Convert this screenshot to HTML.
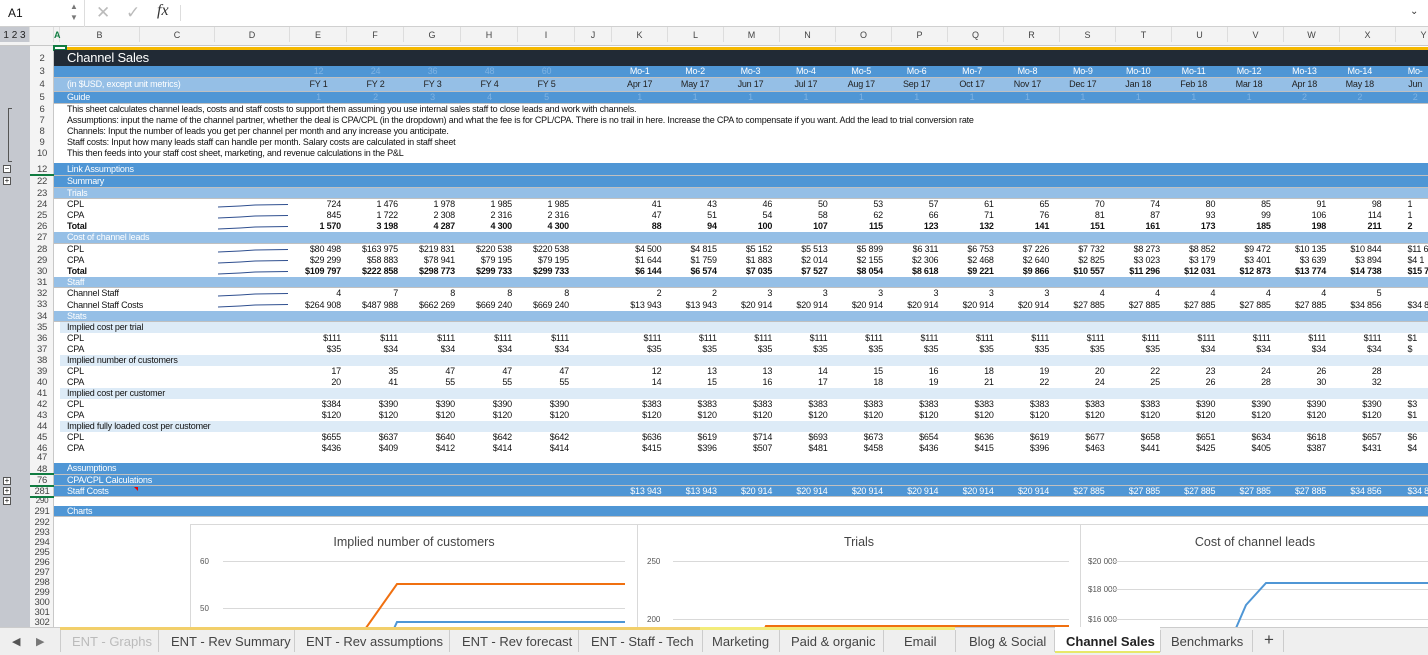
<!DOCTYPE html>
<html><head><meta charset="utf-8">
<style>
*{box-sizing:border-box;margin:0;padding:0}
body{width:1428px;height:655px;overflow:hidden;position:relative;background:#fff;font-family:"Liberation Sans",sans-serif;color:#111}
.abs{position:absolute}
.fb{left:0;top:0;width:1428px;height:27px;border-bottom:1px solid #d0d0d0;background:#fff}
.ch{left:0;top:27px;width:1428px;height:19px;background:#f3f3f3;border-bottom:1px solid #c8c8c8;font-size:9px;color:#444}
.ch span{position:absolute;top:4px;text-align:center;border-right:1px solid #ddd;height:15px;top:0;line-height:17px}
.gut{left:0;top:46px;width:30px;height:581px;background:#c5c8cf}
.rn{left:30px;top:46px;width:24px;height:581px;background:#f4f4f4;border-right:1px solid #c8c8c8}
.n{position:absolute;left:30px;width:24px;text-align:center;font-size:9.5px;color:#444;letter-spacing:-.3px}
.r{position:absolute;left:54px;width:1374px;display:flex;font-size:9px;white-space:nowrap;letter-spacing:-.2px;overflow:hidden}
.r .l{width:236px;padding-left:13px;flex:none}
.r .v{width:57px;text-align:right;padding-right:6px;flex:none}
.r .j{width:37px;flex:none}
.r .m{width:55.4px;text-align:right;padding-right:6px;flex:none}
.r span:nth-child(22){text-align:left;padding-left:20px;padding-right:0}
.c{text-align:center!important;padding-right:0!important;padding-left:0!important}
.bd{background:#4f96d5;color:#fff;border-bottom:1px solid #c0c0c0}
.lt{background:#95bfe6;color:#fff;border-bottom:1px solid #c0c0c0}
.pl{background:#ddebf7}
.b{font-weight:bold}
.fa{color:#7fb3e3}
.tabs{left:0;top:627px;width:1428px;height:28px;background:#efefef;border-top:1px solid #ccc;font-size:13px;color:#444}
.tabs span{position:absolute;top:6px}
.tabs i{position:absolute;top:2px;width:1px;height:22px;background:#ccc}
.chart{position:absolute;top:524px;height:110px;border:1px solid #d9d9d9;background:#fff}
.ct{position:absolute;font-size:12.5px;color:#444;text-align:center;width:100%;top:10px}
.ax{position:absolute;font-size:8px;color:#555}
.gl{position:absolute;height:1px;background:#d9d9d9}
</style></head><body>
<div class="abs fb">
<span class="abs" style="left:8px;top:6px;font-size:12px">A1</span>
<span class="abs" style="left:70px;top:1px;font-size:8px;color:#777;line-height:11px">▲<br>▼</span>
<div class="abs" style="left:84px;top:0;width:1px;height:27px;background:#ddd"></div>
<span class="abs" style="left:96px;top:3px;font-size:17px;color:#bbb">✕</span>
<span class="abs" style="left:126px;top:3px;font-size:17px;color:#bbb">✓</span>
<span class="abs" style="left:157px;top:2px;font-size:16px;font-style:italic;font-family:'Liberation Serif',serif;color:#333">fx</span>
<div class="abs" style="left:180px;top:5px;width:1px;height:16px;background:#ddd"></div>
<span class="abs" style="left:1410px;top:6px;font-size:10px;color:#333">⌄</span>
</div>
<div class="abs ch">
<span style="left:0;width:30px;font-size:10px;color:#222;background:#c5c8cf">1 2 3</span>
<span style="left:30px;width:24px"></span>
<span style="left:54px;width:6px;color:#107c41;font-weight:bold">A</span>
<span style="left:60px;width:80px">B</span><span style="left:140px;width:75px">C</span><span style="left:215px;width:75px">D</span>
<span style="left:290px;width:57px">E</span><span style="left:347px;width:57px">F</span><span style="left:404px;width:57px">G</span><span style="left:461px;width:57px">H</span><span style="left:518px;width:57px">I</span><span style="left:575px;width:37px">J</span>
<span style="left:612px;width:56px">K</span><span style="left:668px;width:56px">L</span><span style="left:724px;width:56px">M</span><span style="left:780px;width:56px">N</span><span style="left:836px;width:56px">O</span><span style="left:892px;width:56px">P</span><span style="left:948px;width:56px">Q</span><span style="left:1004px;width:56px">R</span><span style="left:1060px;width:56px">S</span><span style="left:1116px;width:56px">T</span><span style="left:1172px;width:56px">U</span><span style="left:1228px;width:56px">V</span><span style="left:1284px;width:56px">W</span><span style="left:1340px;width:56px">X</span><span style="left:1396px;width:56px">Y</span>
</div>
<div class="abs gut"></div><div class="abs rn"></div>
<div class="abs" style="left:8px;top:108px;width:4px;height:54px;border:1px solid #555;border-right:none"></div>
<div class="abs" style="left:3px;top:165px;width:8px;height:8px;border:1px solid #555;background:#fff;font-size:8px;line-height:6px;text-align:center">−</div>
<div class="abs" style="left:3px;top:177px;width:8px;height:8px;border:1px solid #555;background:#fff;font-size:8px;line-height:6px;text-align:center">+</div>
<div class="abs" style="left:3px;top:477px;width:8px;height:8px;border:1px solid #555;background:#fff;font-size:8px;line-height:6px;text-align:center">+</div>
<div class="abs" style="left:3px;top:487px;width:8px;height:8px;border:1px solid #555;background:#fff;font-size:8px;line-height:6px;text-align:center">+</div>
<div class="abs" style="left:3px;top:497px;width:8px;height:8px;border:1px solid #555;background:#fff;font-size:8px;line-height:6px;text-align:center">+</div>

<div class="abs" style="left:54px;top:47px;width:1374px;height:3px;background:#f5b800"></div>
<div class="abs" style="left:53px;top:45px;width:14px;height:6px;border:2px solid #107c41;background:#fff"></div>
<div class="n" style="top:53px">2</div><div class="n" style="top:66px">3</div><div class="n" style="top:79px">4</div><div class="n" style="top:92px">5</div>
<div class="n" style="top:104px">6</div><div class="n" style="top:115px">7</div><div class="n" style="top:126px">8</div><div class="n" style="top:137px">9</div><div class="n" style="top:148px">10</div>
<div class="n" style="top:164px">12</div><div class="n" style="top:176px">22</div><div class="n" style="top:188px">23</div><div class="n" style="top:199px">24</div><div class="n" style="top:210px">25</div><div class="n" style="top:221px">26</div><div class="n" style="top:232px">27</div><div class="n" style="top:244px">28</div><div class="n" style="top:255px">29</div><div class="n" style="top:266px">30</div><div class="n" style="top:277px">31</div><div class="n" style="top:288px">32</div><div class="n" style="top:299px">33</div><div class="n" style="top:311px">34</div><div class="n" style="top:322px">35</div><div class="n" style="top:333px">36</div><div class="n" style="top:344px">37</div><div class="n" style="top:355px">38</div><div class="n" style="top:366px">39</div><div class="n" style="top:377px">40</div><div class="n" style="top:388px">41</div><div class="n" style="top:399px">42</div><div class="n" style="top:410px">43</div><div class="n" style="top:421px">44</div><div class="n" style="top:432px">45</div><div class="n" style="top:443px">46</div><div class="n" style="top:452px">47</div><div class="n" style="top:464px">48</div><div class="n" style="top:475px">76</div><div class="n" style="top:486px">281</div><div class="n" style="top:496px;font-size:8px">290</div><div class="n" style="top:506px">291</div>
<div class="n" style="top:517px">292</div><div class="n" style="top:527px">293</div><div class="n" style="top:537px">294</div><div class="n" style="top:547px">295</div><div class="n" style="top:557px">296</div><div class="n" style="top:567px">297</div><div class="n" style="top:577px">298</div><div class="n" style="top:587px">299</div><div class="n" style="top:597px">300</div><div class="n" style="top:607px">301</div><div class="n" style="top:617px">302</div>
<div class="abs" style="left:30px;top:174px;width:24px;height:2px;background:#107c41"></div>
<div class="abs" style="left:30px;top:473px;width:24px;height:2px;background:#107c41"></div>
<div class="abs" style="left:30px;top:485px;width:24px;height:2px;background:#107c41"></div>
<div class="abs" style="left:30px;top:496px;width:24px;height:2px;background:#107c41"></div>

<div class="r" style="top:50px;height:16px;background:#212a35;color:#fff;font-size:13px;line-height:16px"><span class="l">Channel Sales</span></div>
<div class="r bd" style="top:66px;height:12px;line-height:11px"><span class="l"></span><span class="v c fa">12</span><span class="v c fa">24</span><span class="v c fa">36</span><span class="v c fa">48</span><span class="v c fa">60</span><span class="j"></span><span class="m c">Mo-1</span><span class="m c">Mo-2</span><span class="m c">Mo-3</span><span class="m c">Mo-4</span><span class="m c">Mo-5</span><span class="m c">Mo-6</span><span class="m c">Mo-7</span><span class="m c">Mo-8</span><span class="m c">Mo-9</span><span class="m c">Mo-10</span><span class="m c">Mo-11</span><span class="m c">Mo-12</span><span class="m c">Mo-13</span><span class="m c">Mo-14</span><span class="m c">Mo-</span></div>
<div class="r lt" style="top:78px;height:14px;line-height:13px;color:#222"><span class="l" style="color:#fff">(in $USD, except unit metrics)</span><span class="v c">FY 1</span><span class="v c">FY 2</span><span class="v c">FY 3</span><span class="v c">FY 4</span><span class="v c">FY 5</span><span class="j"></span><span class="m c">Apr 17</span><span class="m c">May 17</span><span class="m c">Jun 17</span><span class="m c">Jul 17</span><span class="m c">Aug 17</span><span class="m c">Sep 17</span><span class="m c">Oct 17</span><span class="m c">Nov 17</span><span class="m c">Dec 17</span><span class="m c">Jan 18</span><span class="m c">Feb 18</span><span class="m c">Mar 18</span><span class="m c">Apr 18</span><span class="m c">May 18</span><span class="m c">Jun</span></div>
<div class="r bd" style="top:92px;height:12px;line-height:11px"><span class="l">Guide</span><span class="v c fa">1</span><span class="v c fa">2</span><span class="v c fa">3</span><span class="v c fa">4</span><span class="v c fa">5</span><span class="j"></span><span class="m c fa">1</span><span class="m c fa">1</span><span class="m c fa">1</span><span class="m c fa">1</span><span class="m c fa">1</span><span class="m c fa">1</span><span class="m c fa">1</span><span class="m c fa">1</span><span class="m c fa">1</span><span class="m c fa">1</span><span class="m c fa">1</span><span class="m c fa">1</span><span class="m c fa">2</span><span class="m c fa">2</span><span class="m c fa">2</span></div>
<div class="r" style="top:104px;height:11px;line-height:11px"><span class="l">This sheet calculates channel leads, costs and staff costs to support them assuming you use internal sales staff to close leads and work with channels.</span></div>
<div class="r" style="top:115px;height:11px;line-height:11px"><span class="l">Assumptions: input the name of the channel partner, whether the deal is CPA/CPL (in the dropdown) and what the fee is for CPL/CPA. There is no trail in here. Increase the CPA to compensate if you want. Add the lead to trial conversion rate</span></div>
<div class="r" style="top:126px;height:11px;line-height:11px"><span class="l">Channels: Input the number of leads you get per channel per month and any increase you anticipate.</span></div>
<div class="r" style="top:137px;height:11px;line-height:11px"><span class="l">Staff costs: Input how many leads staff can handle per month. Salary costs are calculated in staff sheet</span></div>
<div class="r" style="top:148px;height:11px;line-height:11px"><span class="l">This then feeds into your staff cost sheet, marketing, and revenue calculations in the P&amp;L</span></div>
<div class="r bd" style="top:163px;height:13px;line-height:12px"><span class="l">Link Assumptions</span></div>
<div class="r bd" style="top:176px;height:12px;line-height:11px"><span class="l">Summary</span></div>
<div class="r lt" style="top:188px;height:11px;line-height:10px"><span class="l">Trials</span></div>
<div class="r" style="top:199px;height:11px;line-height:11px"><span class="l">CPL</span><span class="v">724</span><span class="v">1 476</span><span class="v">1 978</span><span class="v">1 985</span><span class="v">1 985</span><span class="j"></span><span class="m">41</span><span class="m">43</span><span class="m">46</span><span class="m">50</span><span class="m">53</span><span class="m">57</span><span class="m">61</span><span class="m">65</span><span class="m">70</span><span class="m">74</span><span class="m">80</span><span class="m">85</span><span class="m">91</span><span class="m">98</span><span class="m">1</span></div>
<div class="r" style="top:210px;height:11px;line-height:11px"><span class="l">CPA</span><span class="v">845</span><span class="v">1 722</span><span class="v">2 308</span><span class="v">2 316</span><span class="v">2 316</span><span class="j"></span><span class="m">47</span><span class="m">51</span><span class="m">54</span><span class="m">58</span><span class="m">62</span><span class="m">66</span><span class="m">71</span><span class="m">76</span><span class="m">81</span><span class="m">87</span><span class="m">93</span><span class="m">99</span><span class="m">106</span><span class="m">114</span><span class="m">1</span></div>
<div class="r b" style="top:221px;height:11px;line-height:11px"><span class="l">Total</span><span class="v">1 570</span><span class="v">3 198</span><span class="v">4 287</span><span class="v">4 300</span><span class="v">4 300</span><span class="j"></span><span class="m">88</span><span class="m">94</span><span class="m">100</span><span class="m">107</span><span class="m">115</span><span class="m">123</span><span class="m">132</span><span class="m">141</span><span class="m">151</span><span class="m">161</span><span class="m">173</span><span class="m">185</span><span class="m">198</span><span class="m">211</span><span class="m">2</span></div>
<div class="r lt" style="top:232px;height:12px;line-height:11px"><span class="l">Cost of channel leads</span></div>
<div class="r" style="top:244px;height:11px;line-height:11px"><span class="l">CPL</span><span class="v">$80 498</span><span class="v">$163 975</span><span class="v">$219 831</span><span class="v">$220 538</span><span class="v">$220 538</span><span class="j"></span><span class="m">$4 500</span><span class="m">$4 815</span><span class="m">$5 152</span><span class="m">$5 513</span><span class="m">$5 899</span><span class="m">$6 311</span><span class="m">$6 753</span><span class="m">$7 226</span><span class="m">$7 732</span><span class="m">$8 273</span><span class="m">$8 852</span><span class="m">$9 472</span><span class="m">$10 135</span><span class="m">$10 844</span><span class="m">$11 6</span></div>
<div class="r" style="top:255px;height:11px;line-height:11px"><span class="l">CPA</span><span class="v">$29 299</span><span class="v">$58 883</span><span class="v">$78 941</span><span class="v">$79 195</span><span class="v">$79 195</span><span class="j"></span><span class="m">$1 644</span><span class="m">$1 759</span><span class="m">$1 883</span><span class="m">$2 014</span><span class="m">$2 155</span><span class="m">$2 306</span><span class="m">$2 468</span><span class="m">$2 640</span><span class="m">$2 825</span><span class="m">$3 023</span><span class="m">$3 179</span><span class="m">$3 401</span><span class="m">$3 639</span><span class="m">$3 894</span><span class="m">$4 1</span></div>
<div class="r b" style="top:266px;height:11px;line-height:11px"><span class="l">Total</span><span class="v">$109 797</span><span class="v">$222 858</span><span class="v">$298 773</span><span class="v">$299 733</span><span class="v">$299 733</span><span class="j"></span><span class="m">$6 144</span><span class="m">$6 574</span><span class="m">$7 035</span><span class="m">$7 527</span><span class="m">$8 054</span><span class="m">$8 618</span><span class="m">$9 221</span><span class="m">$9 866</span><span class="m">$10 557</span><span class="m">$11 296</span><span class="m">$12 031</span><span class="m">$12 873</span><span class="m">$13 774</span><span class="m">$14 738</span><span class="m">$15 7</span></div>
<div class="r lt" style="top:277px;height:11px;line-height:10px"><span class="l">Staff</span></div>
<div class="r" style="top:288px;height:11px;line-height:11px"><span class="l">Channel Staff</span><span class="v">4</span><span class="v">7</span><span class="v">8</span><span class="v">8</span><span class="v">8</span><span class="j"></span><span class="m">2</span><span class="m">2</span><span class="m">3</span><span class="m">3</span><span class="m">3</span><span class="m">3</span><span class="m">3</span><span class="m">3</span><span class="m">4</span><span class="m">4</span><span class="m">4</span><span class="m">4</span><span class="m">4</span><span class="m">5</span><span class="m"></span></div>
<div class="r" style="top:299px;height:12px;line-height:12px"><span class="l">Channel Staff Costs</span><span class="v">$264 908</span><span class="v">$487 988</span><span class="v">$662 269</span><span class="v">$669 240</span><span class="v">$669 240</span><span class="j"></span><span class="m">$13 943</span><span class="m">$13 943</span><span class="m">$20 914</span><span class="m">$20 914</span><span class="m">$20 914</span><span class="m">$20 914</span><span class="m">$20 914</span><span class="m">$20 914</span><span class="m">$27 885</span><span class="m">$27 885</span><span class="m">$27 885</span><span class="m">$27 885</span><span class="m">$27 885</span><span class="m">$34 856</span><span class="m">$34 8</span></div>
<div class="r lt" style="top:311px;height:11px;line-height:10px"><span class="l">Stats</span></div>
<div class="r pl" style="top:322px;height:11px;line-height:11px;left:60px"><span class="l" style="padding-left:7px">Implied cost per trial</span></div>
<div class="r" style="top:333px;height:11px;line-height:11px"><span class="l">CPL</span><span class="v">$111</span><span class="v">$111</span><span class="v">$111</span><span class="v">$111</span><span class="v">$111</span><span class="j"></span><span class="m">$111</span><span class="m">$111</span><span class="m">$111</span><span class="m">$111</span><span class="m">$111</span><span class="m">$111</span><span class="m">$111</span><span class="m">$111</span><span class="m">$111</span><span class="m">$111</span><span class="m">$111</span><span class="m">$111</span><span class="m">$111</span><span class="m">$111</span><span class="m">$1</span></div>
<div class="r" style="top:344px;height:11px;line-height:11px"><span class="l">CPA</span><span class="v">$35</span><span class="v">$34</span><span class="v">$34</span><span class="v">$34</span><span class="v">$34</span><span class="j"></span><span class="m">$35</span><span class="m">$35</span><span class="m">$35</span><span class="m">$35</span><span class="m">$35</span><span class="m">$35</span><span class="m">$35</span><span class="m">$35</span><span class="m">$35</span><span class="m">$35</span><span class="m">$34</span><span class="m">$34</span><span class="m">$34</span><span class="m">$34</span><span class="m">$</span></div>
<div class="r pl" style="top:355px;height:11px;line-height:11px;left:60px"><span class="l" style="padding-left:7px">Implied number of customers</span></div>
<div class="r" style="top:366px;height:11px;line-height:11px"><span class="l">CPL</span><span class="v">17</span><span class="v">35</span><span class="v">47</span><span class="v">47</span><span class="v">47</span><span class="j"></span><span class="m">12</span><span class="m">13</span><span class="m">13</span><span class="m">14</span><span class="m">15</span><span class="m">16</span><span class="m">18</span><span class="m">19</span><span class="m">20</span><span class="m">22</span><span class="m">23</span><span class="m">24</span><span class="m">26</span><span class="m">28</span></div>
<div class="r" style="top:377px;height:11px;line-height:11px"><span class="l">CPA</span><span class="v">20</span><span class="v">41</span><span class="v">55</span><span class="v">55</span><span class="v">55</span><span class="j"></span><span class="m">14</span><span class="m">15</span><span class="m">16</span><span class="m">17</span><span class="m">18</span><span class="m">19</span><span class="m">21</span><span class="m">22</span><span class="m">24</span><span class="m">25</span><span class="m">26</span><span class="m">28</span><span class="m">30</span><span class="m">32</span></div>
<div class="r pl" style="top:388px;height:11px;line-height:11px;left:60px"><span class="l" style="padding-left:7px">Implied cost per customer</span></div>
<div class="r" style="top:399px;height:11px;line-height:11px"><span class="l">CPL</span><span class="v">$384</span><span class="v">$390</span><span class="v">$390</span><span class="v">$390</span><span class="v">$390</span><span class="j"></span><span class="m">$383</span><span class="m">$383</span><span class="m">$383</span><span class="m">$383</span><span class="m">$383</span><span class="m">$383</span><span class="m">$383</span><span class="m">$383</span><span class="m">$383</span><span class="m">$383</span><span class="m">$390</span><span class="m">$390</span><span class="m">$390</span><span class="m">$390</span><span class="m">$3</span></div>
<div class="r" style="top:410px;height:11px;line-height:11px"><span class="l">CPA</span><span class="v">$120</span><span class="v">$120</span><span class="v">$120</span><span class="v">$120</span><span class="v">$120</span><span class="j"></span><span class="m">$120</span><span class="m">$120</span><span class="m">$120</span><span class="m">$120</span><span class="m">$120</span><span class="m">$120</span><span class="m">$120</span><span class="m">$120</span><span class="m">$120</span><span class="m">$120</span><span class="m">$120</span><span class="m">$120</span><span class="m">$120</span><span class="m">$120</span><span class="m">$1</span></div>
<div class="r pl" style="top:421px;height:11px;line-height:11px;left:60px"><span class="l" style="padding-left:7px">Implied fully loaded cost per customer</span></div>
<div class="r" style="top:432px;height:11px;line-height:11px"><span class="l">CPL</span><span class="v">$655</span><span class="v">$637</span><span class="v">$640</span><span class="v">$642</span><span class="v">$642</span><span class="j"></span><span class="m">$636</span><span class="m">$619</span><span class="m">$714</span><span class="m">$693</span><span class="m">$673</span><span class="m">$654</span><span class="m">$636</span><span class="m">$619</span><span class="m">$677</span><span class="m">$658</span><span class="m">$651</span><span class="m">$634</span><span class="m">$618</span><span class="m">$657</span><span class="m">$6</span></div>
<div class="r" style="top:443px;height:11px;line-height:11px"><span class="l">CPA</span><span class="v">$436</span><span class="v">$409</span><span class="v">$412</span><span class="v">$414</span><span class="v">$414</span><span class="j"></span><span class="m">$415</span><span class="m">$396</span><span class="m">$507</span><span class="m">$481</span><span class="m">$458</span><span class="m">$436</span><span class="m">$415</span><span class="m">$396</span><span class="m">$463</span><span class="m">$441</span><span class="m">$425</span><span class="m">$405</span><span class="m">$387</span><span class="m">$431</span><span class="m">$4</span></div>
<div class="r bd" style="top:463px;height:12px;line-height:11px"><span class="l">Assumptions</span></div>
<div class="r bd" style="top:475px;height:11px;line-height:11px"><span class="l">CPA/CPL Calculations</span></div>
<div class="r bd" style="top:486px;height:11px;line-height:10px"><span class="l">Staff Costs</span><span class="v"></span><span class="v"></span><span class="v"></span><span class="v"></span><span class="v"></span><span class="j"></span><span class="m">$13 943</span><span class="m">$13 943</span><span class="m">$20 914</span><span class="m">$20 914</span><span class="m">$20 914</span><span class="m">$20 914</span><span class="m">$20 914</span><span class="m">$20 914</span><span class="m">$27 885</span><span class="m">$27 885</span><span class="m">$27 885</span><span class="m">$27 885</span><span class="m">$27 885</span><span class="m">$34 856</span><span class="m">$34 8</span></div>
<div class="abs" style="left:134px;top:487px;width:0;height:0;border-left:4px solid transparent;border-top:4px solid #e00"></div>
<div class="r bd" style="top:506px;height:11px;line-height:11px"><span class="l">Charts</span></div>

<svg class="abs" style="left:0;top:0" width="300" height="320">
<g stroke="#2f4f8f" stroke-width="1" fill="none">
<path d="M218 207 L240 206 L255 205 L288 204.5"/>
<path d="M218 218 L240 217 L255 216 L288 215.5"/>
<path d="M218 229 L240 228 L255 227 L288 226.5"/>
<path d="M218 252 L240 251 L255 250 L288 249.5"/>
<path d="M218 263 L240 262 L255 261 L288 260.5"/>
<path d="M218 274 L240 273 L255 272 L288 271.5"/>
<path d="M218 296 L240 295 L255 294 L288 293.5"/>
<path d="M218 307 L240 306 L255 305 L288 304.5"/>
</g></svg>

<div class="chart" style="left:190px;width:448px">
<div class="ct" style="top:10px">Implied number of customers</div>
<span class="ax" style="left:9px;top:32px">60</span><span class="ax" style="left:9px;top:79px">50</span>
<div class="gl" style="left:32px;width:402px;top:36px"></div><div class="gl" style="left:32px;width:402px;top:83px"></div>
<svg class="abs" style="left:0;top:0" width="448" height="110"><path d="M170 110 L206 59 L434 59" stroke="#f07010" stroke-width="2" fill="none"/><path d="M200 110 L206 97 L434 97" stroke="#4f96d5" stroke-width="2" fill="none"/></svg>
</div>
<div class="chart" style="left:637px;width:444px">
<div class="ct">Trials</div>
<span class="ax" style="left:9px;top:32px">250</span><span class="ax" style="left:9px;top:90px">200</span>
<div class="gl" style="left:35px;width:396px;top:36px"></div><div class="gl" style="left:35px;width:396px;top:94px"></div>
<svg class="abs" style="left:0;top:0" width="444" height="110"><path d="M124 110 L128 101 L431 101" stroke="#f07010" stroke-width="2" fill="none"/></svg>
</div>
<div class="chart" style="left:1080px;width:360px">
<div class="ct" style="width:348px">Cost of channel leads</div>
<span class="ax" style="left:7px;top:32px">$20 000</span><span class="ax" style="left:7px;top:60px">$18 000</span><span class="ax" style="left:7px;top:90px">$16 000</span>
<div class="gl" style="left:30px;width:330px;top:36px"></div><div class="gl" style="left:30px;width:330px;top:64px"></div><div class="gl" style="left:30px;width:330px;top:94px"></div>
<svg class="abs" style="left:0;top:0" width="360" height="110"><path d="M152 110 L165 80 L185 58 L360 58" stroke="#4f96d5" stroke-width="2" fill="none"/></svg>
</div>

<div class="abs tabs">
<div class="abs" style="left:60px;top:-1px;width:640px;height:3px;background:#f2cf6a"></div>
<div class="abs" style="left:700px;top:-1px;width:255px;height:3px;background:#f3ec7a"></div>
<span style="left:12px;font-size:11px;color:#555;top:7px">◀</span><span style="left:36px;font-size:11px;color:#777;top:7px">▶</span>
<i style="left:60px"></i>
<span style="left:72px;color:#bbb">ENT - Graphs</span><i style="left:158px"></i>
<span style="left:171px">ENT - Rev Summary</span><i style="left:294px"></i>
<span style="left:306px">ENT - Rev assumptions</span><i style="left:449px"></i>
<span style="left:462px">ENT - Rev forecast</span><i style="left:578px"></i>
<span style="left:591px">ENT - Staff - Tech</span><i style="left:702px"></i>
<span style="left:712px">Marketing</span><i style="left:779px"></i>
<span style="left:791px">Paid &amp; organic</span><i style="left:883px"></i>
<span style="left:904px">Email</span><i style="left:955px"></i>
<div class="abs" style="left:1055px;top:-1px;width:105px;height:26px;background:#fff;border-bottom:2px solid #e8e86a"></div>
<span style="left:969px">Blog &amp; Social</span><i style="left:1054px"></i>
<span style="left:1066px;font-weight:bold;color:#222">Channel Sales</span><i style="left:1160px"></i>
<span style="left:1171px">Benchmarks</span><i style="left:1252px"></i>
<span style="left:1264px;font-size:17px;top:2px">+</span><i style="left:1283px"></i>
</div>
</body></html>
